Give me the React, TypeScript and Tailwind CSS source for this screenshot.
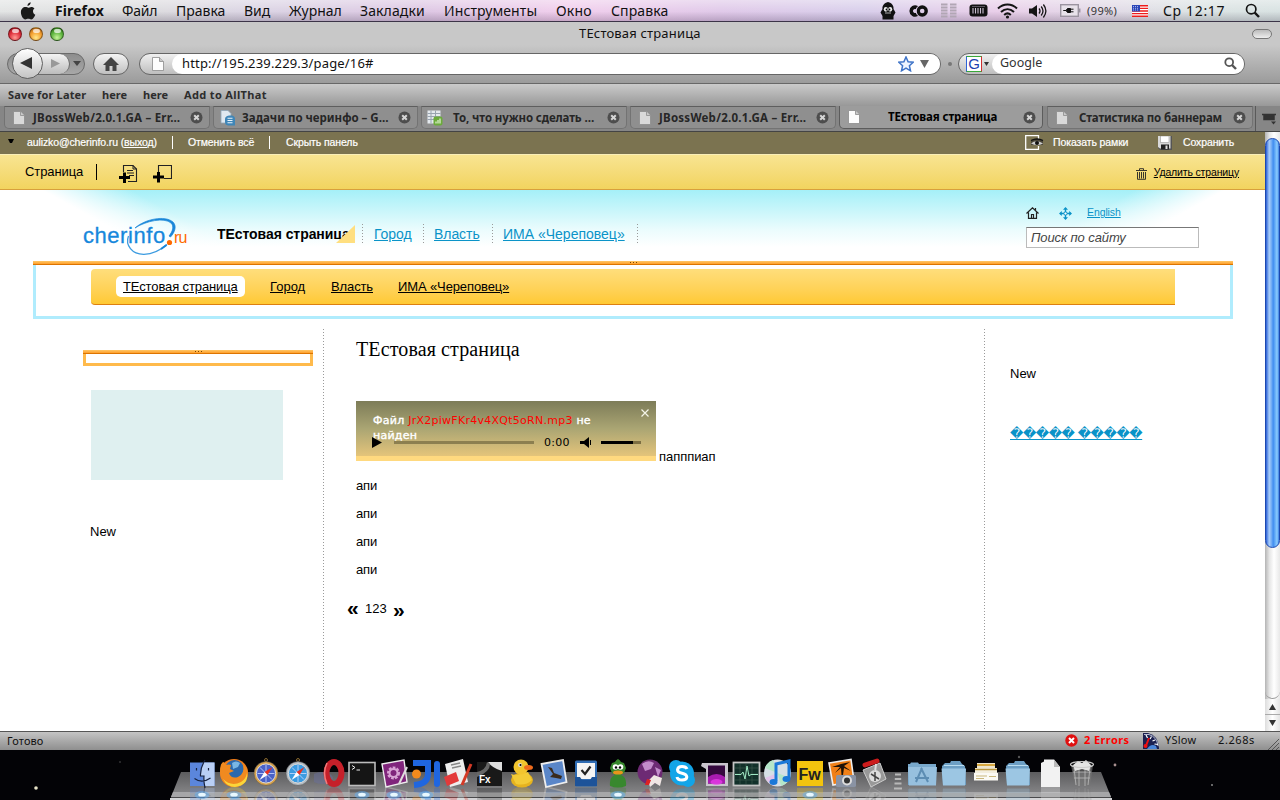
import React from "react";

const LUCIDA = "font-['Noto_Sans','Open_Sans',sans-serif]";
const ARIAL = "font-['Liberation_Sans',Arial,sans-serif]";

/* ---------- small glyphs ---------- */

function Page({ dim = false }: { dim?: boolean }) {
  return (
    <svg width="12" height="14" viewBox="0 0 12 14" className="shrink-0">
      <path d="M.5.5H7.5L11.500 4.500V13.500H.5Z" fill={dim ? "#d9d9d9" : "#fdfdfd"} stroke="#8b8b8b" strokeWidth=".8" />
      <path d="M7.500.5V4.500H11.500" fill="#c9c9c9" stroke="#8b8b8b" strokeWidth=".8" />
    </svg>
  );
}

function DocIcon() {
  return (
    <svg width="16" height="16" viewBox="0 0 16 16" className="shrink-0">
      <path d="M1 .5H8L11 3.500V13H1Z" fill="#dfe8f0" stroke="#8fa6b8" strokeWidth=".8" />
      <path d="M9 5.500H12Q15 6 15 9V15.500H8Q5 15 5 12V9Q5 6 9 5.500Z" fill="#3f86b8" />
      <path d="M7.500 8.200H12.500M7.500 10.500H12.500M7.500 12.800H12.500" stroke="#e8f3fb" strokeWidth="1.100" />
    </svg>
  );
}

function SheetIcon() {
  return (
    <svg width="16" height="16" viewBox="0 0 16 16" className="shrink-0">
      <rect x=".5" y=".5" width="13" height="13" fill="#e4e9ee" />
      <path d="M.5 3.500H13.500M.5 6.500H13.500M.5 9.500H13.500M4 .5V13.500M8.500 .5V13.500" stroke="#98a4b0" />
      <rect x="6.500" y="6.500" width="9" height="9" rx="2" fill="#6cab3c" />
      <path d="M9 13.500V11.500M11 13.500V10M13 13.500V8.500" stroke="#e6f6d8" strokeWidth="1.200" />
    </svg>
  );
}

function CloseDot() {
  return (
    <svg width="13" height="13" viewBox="0 0 13 13" className="shrink-0">
      <circle cx="6.500" cy="6.500" r="6" fill="#4d4d4d" />
      <path d="M4.200 4.200L8.800 8.800M8.800 4.200L4.200 8.800" stroke="#d4d4d4" strokeWidth="2" />
    </svg>
  );
}

/* ---------- system menu bar ---------- */

function MenuBar() {
  return (
    <header
      className={`relative flex h-[22px] shrink-0 items-center border-b border-[#3c3448] bg-[linear-gradient(to_bottom,rgba(255,255,255,.45),rgba(255,255,255,.12)_55%,rgba(60,50,70,.22)),linear-gradient(to_right,#dfe1e1_0,#d9d9da_130px,#d6cfe0_250px,#d9c0e0_420px,#efc8ea_570px,#dcc2e6_720px,#d3c8e8_860px,#e6c8e6_1000px,#dfd3e4_1090px,#d7e0e0_1200px,#d3dede)] text-[14px] leading-[22px] text-[#111] ${LUCIDA}`}
    >
      <div className="flex h-full w-[55px] shrink-0 items-center pl-5">
        <svg width="16" height="18" viewBox="0 0 16 18">
          <path d="M10.700.2c.2 1.700-1.500 3.700-3.200 3.700C7.200 2.200 8.900.4 10.700.2ZM13 9.200c0-1.700 1.300-2.600 1.500-2.700-1-1.500-2.500-1.600-3-1.600-1.300-.1-2.500.8-3.100.8-.7 0-1.700-.7-2.800-.7C3 5 .9 7 .9 10.200c0 3.300 2.300 7.300 4.400 7.300 1 0 1.700-.7 3-.7s1.800.7 3 .7c1.800 0 3.600-3.400 4-4.700C15.200 12.700 13 11.900 13 9.200Z" fill="#1a1a1a" />
        </svg>
      </div>
      <span className="w-[67px] shrink-0 font-bold tracking-[.1px]">Firefox</span>
      <span className="w-[54px] shrink-0 tracking-[-.2px]">Файл</span>
      <span className="w-[68px] shrink-0">Правка</span>
      <span className="w-[45px] shrink-0">Вид</span>
      <span className="w-[71px] shrink-0">Журнал</span>
      <span className="w-[84px] shrink-0 tracking-[.1px]">Закладки</span>
      <span className="w-[112px] shrink-0 tracking-[.1px]">Инструменты</span>
      <span className="w-[55px] shrink-0 tracking-[.2px]">Окно</span>
      <span className="w-[269px] shrink-0 tracking-[.1px]">Справка</span>

      <div className="w-[28px] shrink-0">
        <svg width="16" height="18" viewBox="0 0 16 18">
          <path d="M8 0C4 1 2 4 2.500 7L.5 10.500L2.500 14V17.500H13.500V14L15.500 10.500L13.500 7C14 4 12 1 8 0Z" fill="#111" />
          <ellipse cx="5.800" cy="7.300" rx="2" ry="2.400" fill="#eee" />
          <ellipse cx="10.200" cy="7.300" rx="2" ry="2.400" fill="#eee" />
          <circle cx="6.500" cy="7.500" r=".9" /><circle cx="9.500" cy="7.500" r=".9" />
          <path d="M5 11h6" stroke="#aaa" />
        </svg>
      </div>
      <div className="w-[33px] shrink-0">
        <svg width="20" height="12" viewBox="0 0 20 12">
          <path d="M9 2.600A3.900 3.900 0 1 0 9 9.400" fill="none" stroke="#111" strokeWidth="3.600" />
          <circle cx="14.200" cy="6" r="4" fill="none" stroke="#111" strokeWidth="3.400" />
          <path d="M8.900 2.500Q7.300 6 8.900 9.500" fill="none" stroke="#d9c8e2" strokeWidth="1" />
        </svg>
      </div>
      <div className="w-[28px] shrink-0">
        <svg width="16" height="15" viewBox="0 0 16 15">
          <path d="M0 1.500h6.500M9 1.500h6.500M0 4.500h6.500M9 4.500h6.500M0 7.500h6.500M9 7.500h6.500M0 10.500h6.500M9 10.500h6.500M0 13.500h6.500M9 13.500h6.500" stroke="#b1a6b4" strokeWidth="2" />
        </svg>
      </div>
      <div className="w-[28px] shrink-0">
        <svg width="19" height="13" viewBox="0 0 19 13">
          <rect x=".5" y=".5" width="18" height="12" rx="3" fill="#111" />
          <path d="M4 4v5.500M6.500 4v5.500M9 4v5.500M11.500 4v5.500M14 4v5.500" stroke="#cbbfd2" strokeWidth="1.100" />
          <path d="M3 2.500h13" stroke="#8a8090" strokeWidth=".6" />
        </svg>
      </div>
      <div className="w-[32px] shrink-0">
        <svg width="21" height="16" viewBox="0 0 21 16">
          <path d="M1 5.500C6.500.2 14.500.2 20 5.500M4 9c4-3.800 9-3.800 13 0M7.200 12c2-2 4.600-2 6.600 0" fill="none" stroke="#151515" strokeWidth="2" />
          <circle cx="10.500" cy="14" r="1.600" fill="#151515" />
        </svg>
      </div>
      <div className="w-[31px] shrink-0">
        <svg width="18" height="16" viewBox="0 0 18 16">
          <path d="M0 5.500h3L8 2v12L3 10.500H0Z" fill="#151515" />
          <path d="M10 5.500q2 2.500 0 5M12.200 3.500q3.600 4.500 0 9M14.400 1.500q5 6.500 0 13" fill="none" stroke="#151515" strokeWidth="1.300" />
        </svg>
      </div>
      <div className="w-[27px] shrink-0">
        <svg width="21" height="13" viewBox="0 0 21 13">
          <rect x=".7" y=".7" width="17.600" height="11.600" fill="#e8e2ea" stroke="#9b94a0" strokeWidth="1.400" />
          <path d="M19.700 4.500v4" stroke="#9b94a0" strokeWidth="1.500" />
          <path d="M3.500 6.500H6L7.500 4.500H10.500V8.500H7.500L6 6.500ZM11 5.200h2.500M11 7.800h2.500" fill="#111" stroke="#111" />
        </svg>
      </div>
      <span className="w-[45px] shrink-0 text-[11px] tracking-[.4px] text-[#333]">(99%)</span>
      <div className="w-[31px] shrink-0">
        <svg width="16" height="12" viewBox="0 0 16 12">
          <rect width="16" height="12" fill="#fff" />
          <path d="M0 .8h16M0 3.400h16M0 6h16M0 8.600h16M0 11.200h16" stroke="#ee1c1c" strokeWidth="1.400" />
          <rect width="8" height="6.500" fill="#2a46b8" />
          <path d="M1 1.500h6M1 3.300h6M1 5h6" stroke="#dfe5ff" strokeWidth=".7" strokeDasharray="1 1" />
        </svg>
      </div>
      <span className="w-[82px] shrink-0 tracking-[.65px] whitespace-nowrap">Ср 12:17</span>
      <svg width="16" height="16" viewBox="0 0 16 16" className="shrink-0">
        <circle cx="6.200" cy="6.200" r="4.700" fill="none" stroke="#151515" strokeWidth="1.700" />
        <path d="M9.700 9.700L14 14" stroke="#151515" strokeWidth="2.400" />
      </svg>
    </header>
  );
}

/* ---------- browser chrome ---------- */

const LIGHTS = [
  "bg-[radial-gradient(circle_at_50%_80%,#ff9c94,#e0303c_50%,#8c0c16)]",
  "bg-[radial-gradient(circle_at_50%_80%,#ffe88a,#f5a030_50%,#9c5510)]",
  "bg-[radial-gradient(circle_at_50%_80%,#c8f59a,#5fb540_50%,#23660f)]",
];

function TitleBar() {
  return (
    <div className={`flex h-[23px] shrink-0 items-center bg-[#c8c8c8] pl-2 ${LUCIDA}`}>
      <div className="flex w-[571px] shrink-0 items-center gap-[7px]">
        {LIGHTS.map((c) => (
          <span key={c} className={`h-[14px] w-[14px] rounded-full border border-black/40 ${c}`}>
            <span className="mx-auto mt-px block h-[4px] w-[7px] rounded-full bg-white/70" />
          </span>
        ))}
      </div>
      <span className="flex-1 text-[13px] leading-[20px] tracking-[.17px] -mt-[2px] text-[#111]">ТЕстовая страница</span>
      <span className="mr-2 h-[10px] w-[20px] rounded-full border border-[#777] bg-gradient-to-b from-[#bbb] to-[#eee]" />
    </div>
  );
}

function NavBar() {
  return (
    <div className={`flex h-[39px] shrink-0 items-center border-b border-[#686868] bg-gradient-to-b from-[#c8c8c8] to-[#9b9b9b] pl-[7px] pb-px text-[#111] ${LUCIDA}`}>
      <div className="flex h-[32px] w-[86px] shrink-0 items-center">
        <div className="relative flex h-[22px] w-[78px] items-center rounded-full border border-[#6b6b6b] bg-gradient-to-b from-[#8d8d8d] to-[#a8a8a8]">
          <span className="ml-[20px] flex h-[20px] w-[42px] items-center justify-end rounded-full border-r border-[#6b6b6b] bg-gradient-to-b from-[#f4f4f4] to-[#bcbcbc] pr-[9px]">
            <svg width="9" height="9" viewBox="0 0 9 9"><path d="M0 0L9 4.500L0 9Z" fill="#999" /></svg>
          </span>
          <svg width="8" height="5" viewBox="0 0 8 5" className="ml-[3px]"><path d="M0 0H8L4 5Z" fill="#444" /></svg>
          <span className="absolute -top-[6px] left-[4px] flex h-[31px] w-[31px] items-center justify-center rounded-full border border-[#606060] bg-gradient-to-b from-white to-[#c4c4c4]">
            <svg width="12" height="12" viewBox="0 0 12 12" className="mr-[3px]"><path d="M12 0V12L0 6Z" fill="#333" /></svg>
          </span>
        </div>
      </div>
      <div className="flex h-[22px] w-[36px] shrink-0 items-center justify-center rounded-full border border-[#666] bg-gradient-to-b from-[#f4f4f4] to-[#c0c0c0]">
        <svg width="16" height="14" viewBox="0 0 16 14"><path d="M8 0L16 8H13.500V14H9.500V9H6.500V14H2.500V8H0Z" fill="#444" /></svg>
      </div>
      <div className="ml-[10px] flex h-[22px] w-[802px] shrink-0 items-center rounded-full border border-[#666] bg-gradient-to-b from-[#f0f0f0] to-[#bebebe] pl-[12px]">
        <Page />
        <div className="ml-[8px] flex h-[20px] flex-1 items-center rounded-full bg-white pl-[10px]">
          <span className="-mt-px flex-1 text-[13px] leading-5 tracking-[.16px]">http://195.239.229.3/page/16#</span>
          <svg width="16" height="16" viewBox="0 0 16 16">
            <path d="M8 1L10.100 5.700L15.200 6.200L11.400 9.700L12.500 14.800L8 12.200L3.500 14.800L4.600 9.700L.8 6.200L5.900 5.700Z" fill="#eef5ff" stroke="#3f74c8" strokeWidth="1.500" />
          </svg>
          <svg width="9" height="8" viewBox="0 0 9 8" className="mr-[11px] ml-[6px]"><path d="M0 0H9L4.500 8Z" fill="#666" /></svg>
        </div>
      </div>
      <span className="mx-[7px] h-[4px] w-[4px] shrink-0 rounded-full bg-[#777]" />
      <div className="-ml-px flex h-[22px] w-[287px] shrink-0 items-center rounded-full border border-[#666] bg-gradient-to-b from-[#f0f0f0] to-[#bebebe] pl-[7px]">
        <span className="flex h-[16px] w-[16px] items-center justify-center border border-t-[#39a839] border-r-[#d03030] border-b-[#39a839] border-l-[#2f62d8] bg-white font-['Liberation_Sans',sans-serif] text-[15px] leading-none text-[#1c3fb0]">G</span>
        <svg width="5" height="4" viewBox="0 0 5 4" className="ml-[2px]"><path d="M0 0H5L2.500 4Z" fill="#333" /></svg>
        <div className="ml-[3px] flex h-[20px] flex-1 items-center rounded-full bg-white pr-[7px] pl-[8px]">
          <span className="-mt-px flex-1 text-[12.500px] leading-5 text-[#333]">Google</span>
          <svg width="13" height="13" viewBox="0 0 13 13">
            <circle cx="5.200" cy="5.200" r="3.900" fill="none" stroke="#555" strokeWidth="1.800" />
            <path d="M8 8L12 12" stroke="#555" strokeWidth="2.400" />
          </svg>
        </div>
      </div>
    </div>
  );
}

function Bookmarks() {
  return (
    <div className={`flex h-[22px] shrink-0 items-center bg-gradient-to-b from-[#cbcbcb] to-[#989898] pl-2 text-[11px] font-bold text-[#2d2d2d] ${LUCIDA}`}>
      <span className="w-[94px] shrink-0 tracking-[.15px]">Save for Later</span>
      <span className="w-[41px] shrink-0">here</span>
      <span className="w-[41px] shrink-0">here</span>
      <span className="tracking-[.35px]">Add to AllThat</span>
    </div>
  );
}

type TabInfo = { title: string; icon: React.ReactNode; box: string; text: string; active?: boolean };

const TABS: TabInfo[] = [
  { title: "JBossWeb/2.0.1.GA – Err…", icon: <Page dim />, box: "ml-[4px] w-[206px] pl-[8px]", text: "pl-[8px] tracking-[.24px]" },
  { title: "Задачи по черинфо – G…", icon: <DocIcon />, box: "ml-[3px] w-[205px] pl-[6px]", text: "pl-[6px]" },
  { title: "То, что нужно сделать …", icon: <SheetIcon />, box: "ml-[3px] w-[206px] pl-[5px]", text: "pl-[10px] tracking-[-.12px]" },
  { title: "JBossWeb/2.0.1.GA – Err…", icon: <Page dim />, box: "ml-[3px] w-[206px] pl-[8px]", text: "pl-[8px] tracking-[.24px]" },
  { title: "ТЕстовая страница", icon: <Page />, box: "ml-[3px] w-[204px] pl-[8px]", text: "pl-[28px] tracking-[-.12px]", active: true },
  { title: "Статистика по баннерам", icon: <Page dim />, box: "ml-[4px] w-[206px] pl-[8px]", text: "pl-[11px] tracking-[-.18px]" },
];

function TabStrip() {
  return (
    <div className={`flex h-[26px] shrink-0 items-start border-b border-[#444] bg-[#868686] text-[11.500px] font-bold ${LUCIDA}`}>
      {TABS.map((t, i) => (
        <div
          key={i}
          className={`flex h-[23px] shrink-0 items-center overflow-hidden rounded-b-[5px] border pr-[6px] whitespace-nowrap ${t.box} ${
            t.active ? "border-t-0 border-[#5c5c5c] bg-[#9c9c9c] text-black" : "border-[#737373] border-t-[#5e5e5e] bg-[#8f8f8f] text-[#262626]"
          }`}
        >
          {t.icon}
          <span className={`min-w-0 flex-1 overflow-hidden ${t.text}`}>{t.title}</span>
          <CloseDot />
        </div>
      ))}
      <div className="ml-[2px] flex h-[25px] flex-1 items-center justify-center border-l border-[#5a5a5a] pl-[2px]">
        <svg width="15" height="12" viewBox="0 0 15 12"><path d="M0 1.500H14M2 3H12V6.500H2Z" fill="#333" stroke="#333" strokeWidth="1.500" /><path d="M9 8.500H14L11.500 11.500Z" fill="#333" /></svg>
      </div>
    </div>
  );
}

/* ---------- page ---------- */

function AdminBar() {
  return (
    <div className={`flex h-[22px] shrink-0 items-center bg-[#7b7350] pb-px text-[10.500px] tracking-[-.11px] text-white ${ARIAL} [-webkit-text-stroke:.2px_white]`}>
      <svg width="6" height="5" viewBox="0 0 6 5" className="-mt-[2px] ml-[8px] shrink-0"><path d="M0 0H6L4 4H2Z" fill="#000" /></svg>
      <span className="ml-[13px] w-[145px] shrink-0 whitespace-nowrap">aulizko@cherinfo.ru (<u>выход</u>)</span>
      <span className="h-[13px] w-px shrink-0 bg-white" />
      <span className="ml-[15px] w-[81px] shrink-0 whitespace-nowrap">Отменить всё</span>
      <span className="h-[13px] w-px shrink-0 bg-white" />
      <span className="ml-[16px] w-[739px] shrink-0">Скрыть панель</span>
      <svg width="19" height="15" viewBox="0 0 19 15" className="shrink-0">
        <path d="M13.500 4V.7H.7V14.300H13.500V11" fill="none" stroke="#fff" strokeWidth="1.300" />
        <path d="M6 5Q12 2.500 18 5L18 10H6Z" fill="#4a4638" />
        <path d="M6 8.500Q11 4 18 8.500Q12 12 6 8.500" fill="#ccc" />
        <circle cx="12" cy="8" r="2" fill="#111" /><path d="M6 5.500Q12 2.500 18 5.500" fill="none" stroke="#111" strokeWidth="1.300" />
      </svg>
      <span className="ml-[9px] w-[105px] shrink-0">Показать рамки</span>
      <svg width="14" height="14" viewBox="0 0 14 14" className="shrink-0">
        <path d="M0 0H14V14H2L0 12Z" fill="#555" /><path d="M0 0H12.500V12.500H2L0 11Z" fill="#d8d8d8" />
        <rect x="2.500" y="0" width="8.500" height="6.500" fill="#fff" stroke="#999" strokeWidth=".6" />
        <rect x="3" y="8.500" width="8" height="5" fill="#222" /><rect x="7.500" y="9.500" width="2" height="3.500" fill="#ddd" />
      </svg>
      <span className="ml-[11px]">Сохранить</span>
    </div>
  );
}

function PageBar() {
  return (
    <div className={`flex h-[36px] shrink-0 items-center border-t border-b border-t-[#f9eeb8] border-b-[#d8a03c] bg-gradient-to-b from-[#f8e491] to-[#f2d45e] pl-[25px] text-black ${ARIAL}`}>
      <span className="w-[71px] shrink-0 text-[13px] tracking-[-.1px]">Страница</span>
      <span className="mr-[22px] h-[16px] w-px shrink-0 bg-black" />
      <svg width="19" height="19" viewBox="0 0 19 19" className="mt-[3px] mr-[15px] shrink-0">
        <path d="M4.500 8V1.500H14L17.500 5V17.500H9" fill="none" stroke="#222" strokeWidth="1.100" />
        <path d="M14 1.500V5H17.500M8 6.500H14M8 9H15M10 11.500H15" fill="none" stroke="#222" />
        <path d="M0 13.500H11M5.500 8.500V19" stroke="#000" strokeWidth="3" />
      </svg>
      <svg width="19" height="19" viewBox="0 0 19 19" className="mt-[3px] shrink-0">
        <path d="M5.500 8V1.500H18.500V14.500H11" fill="none" stroke="#222" strokeWidth="1.100" />
        <path d="M0 13H11M5.500 8V18.500" stroke="#000" strokeWidth="3" />
      </svg>
      <div className="mt-px mr-[26px] ml-auto flex items-center gap-[7px] text-[10.500px] tracking-[-.15px]">
        <svg width="11" height="12" viewBox="0 0 11 12" className="mt-[3px]">
          <path d="M0 2.500H11M3.500 2V.7H7.500V2M1.500 4V11.300H9.500V4M3.500 4V10.500M5.500 4V10.500M7.500 4V10.500" fill="none" stroke="#222" strokeWidth=".9" />
        </svg>
        <u>Удалить страницу</u>
      </div>
    </div>
  );
}

function HeaderGlow() {
  return (
    <svg width="1265" height="70" viewBox="0 0 1265 70" className="absolute top-0 left-0">
      <defs>
        <linearGradient id="sky" x1="0" y1="0" x2="0" y2="1">
          <stop offset="0" stopColor="#a5f0f8" /><stop offset=".3" stopColor="#c3f5fa" /><stop offset=".7" stopColor="#ebfcfd" /><stop offset="1" stopColor="#fff" />
        </linearGradient>
        <linearGradient id="fadeL" gradientUnits="userSpaceOnUse" x1="42" y1="0" x2="63" y2="-38">
          <stop offset="0" stopColor="#fff" /><stop offset="1" stopColor="#fff" stopOpacity="0" />
        </linearGradient>
        <linearGradient id="fadeR" gradientUnits="userSpaceOnUse" x1="1225" y1="0" x2="1204" y2="-38">
          <stop offset="0" stopColor="#fff" /><stop offset="1" stopColor="#fff" stopOpacity="0" />
        </linearGradient>
      </defs>
      <rect width="1265" height="57" fill="url(#sky)" />
      <rect width="632" height="70" fill="url(#fadeL)" />
      <rect x="632" width="633" height="70" fill="url(#fadeR)" />
    </svg>
  );
}

const DOT_V = "bg-[repeating-linear-gradient(to_bottom,#9a9a9a_0,#9a9a9a_1px,transparent_1px,transparent_3px)]";

function Logo() {
  return (
    <div className="relative h-[40px] w-[106px] shrink-0 font-['Liberation_Sans',sans-serif] leading-none">
      <span className="absolute top-[9px] left-0 text-[22px] tracking-[.55px] text-[#1788dc] [-webkit-text-stroke:.3px_#1788dc]">cherinfo</span>
      <span className="absolute top-[14px] left-[91px] text-[16px] tracking-[-.8px] text-[#ff6a00]">ru</span>
      <svg width="106" height="40" viewBox="0 0 106 40" className="absolute top-0 left-0">
        <path d="M52 12C62 3 82-1 90 6C94 10 92 16 87.500 21L86 20C90 15 91 10 88 7C81 1 63 5 52 12Z" fill="#1a86d8" stroke="#1a86d8" strokeWidth=".7" />
        <path d="M45.500 20C42 29 49 38.500 61 38.300C71 38 80 32 84 28.500" fill="none" stroke="#3b9be0" strokeWidth="1.300" />
        <path d="M78 33L83.500 29" stroke="#1a86d8" strokeWidth="2" />
        <circle cx="86.500" cy="26.500" r="2.600" fill="#ff6a00" />
      </svg>
    </div>
  );
}

function SiteHeader() {
  return (
    <div className={`relative h-[71px] shrink-0 ${ARIAL}`}>
      <HeaderGlow />
      <div className="relative flex h-full">
        <div className="flex w-[1026px] shrink-0 items-start pl-[83px] pt-[26px]">
          <Logo />
          <div className="mt-[8px] ml-[28px] flex items-center text-[14px] leading-[18px] tracking-[-.06px] text-[#0a93c8]">
            <div className="relative w-[138px] overflow-hidden font-bold whitespace-nowrap text-black">
              ТЕстовая страница
              <svg width="19" height="18" viewBox="0 0 19 18" className="absolute right-0 bottom-0"><path d="M19 0V18H0Z" fill="#ffdf80" /></svg>
            </div>
            <span className={`ml-[7px] h-[19px] w-px ${DOT_V}`} />
            <u className="w-[60px] pl-[11px]">Город</u>
            <span className={`h-[19px] w-px ${DOT_V}`} />
            <u className="w-[68px] pl-[10px]">Власть</u>
            <span className={`h-[19px] w-px ${DOT_V}`} />
            <u className="w-[144px] pl-[10px] tracking-normal whitespace-nowrap">ИМА «Череповец»</u>
            <span className={`h-[19px] w-px ${DOT_V}`} />
          </div>
        </div>
        <div className="flex flex-col pt-[15px]">
          <div className="flex h-[16px] items-center">
            <svg width="13" height="12" viewBox="0 0 13 12"><path d="M.5 6.500L6.500.8L12.500 6.500M2.500 5.500V11.400H10.500V5.500M5.500 11V7.500H7.500V11M9.500 3V1" fill="none" stroke="#222" strokeWidth="1.200" /></svg>
            <svg width="13" height="13" viewBox="0 0 13 13" className="ml-[20px]">
              <path d="M6.500 1V12M1 6.500H12" stroke="#0a93c8" strokeWidth="1.400" />
              <path d="M4 2.800L6.500 0L9 2.800ZM4 10.200L6.500 13L9 10.200ZM2.800 4L0 6.500L2.800 9ZM10.200 4L13 6.500L10.200 9Z" fill="#0a93c8" />
              <circle cx="6.500" cy="6.500" r="1.600" fill="#fff" stroke="#0a93c8" />
            </svg>
            <u className="ml-[15px] text-[10.500px] tracking-[-.1px] text-[#0a93c8]">English</u>
          </div>
          <div className="mt-[6px] flex h-[21px] w-[173px] items-center border border-[#bbb] border-t-[#777] bg-white pl-[4px] text-[13px] tracking-[-.1px] text-[#444] italic">Поиск по сайту</div>
        </div>
      </div>
    </div>
  );
}

function Grip() {
  return (
    <div className="flex h-[4px] shrink-0 justify-center gap-[2px] border-b border-[#dd7400] bg-gradient-to-b from-[#ffc766] to-[#ff9f26]">
      <i className="mt-px h-px w-px bg-[#774400]" />
      <i className="mt-px h-px w-px bg-[#774400]" />
      <i className="mt-px h-px w-px bg-[#774400]" />
    </div>
  );
}

function SubNav() {
  return (
    <div className={`ml-[33px] flex h-[58px] w-[1200px] shrink-0 flex-col ${ARIAL}`}>
      <Grip />
      <div className="flex-1 border-[3px] border-t-0 border-[#b0ecfd] pt-[4px] pl-[55px]">
        <nav className="flex h-[36px] w-[1084px] items-center rounded-l-[4px] border-b border-[#dd8010] bg-gradient-to-b from-[#ffde7b] to-[#ffc932] text-[13px] tracking-[-.12px] text-black">
          <u className="ml-[25px] flex h-[21px] w-[129px] shrink-0 items-center rounded-[5px] bg-white pl-[7px]">ТЕстовая страница</u>
          <u className="ml-[25px] w-[61px] shrink-0 tracking-normal">Город</u>
          <u className="w-[67px] shrink-0">Власть</u>
          <u>ИМА «Череповец»</u>
        </nav>
      </div>
    </div>
  );
}

function Player() {
  return (
    <div className="flex h-[60px] w-[300px] shrink-0 flex-col border-b-[5px] border-[#ffd97f] bg-gradient-to-b from-[#7d7c58] via-[#aaa573] to-[#e4c47a] font-['DejaVu_Sans',Verdana,sans-serif] text-[11px]">
      <div className="flex h-[34px] pt-[12px] pl-[17px]">
        <p className="w-[240px] leading-[15px] tracking-[.26px] text-white">
          <span className="[-webkit-text-stroke:.4px_white]">Файл</span> <span className="text-[#f00]">JrX2piwFKr4v4XQt5oRN.mp3</span> <span className="[-webkit-text-stroke:.4px_white]">не найден</span>
        </p>
        <svg width="8" height="8" viewBox="0 0 8 8" className="mt-[-4px] ml-[28px]"><path d="M.5.5L7.500 7.500M7.500.5L.5 7.500" stroke="#f4f4e8" strokeWidth="1.200" /></svg>
      </div>
      <div className="relative flex h-[15px] items-center pl-[16px] text-black">
        <svg width="11" height="11" viewBox="0 0 11 11"><path d="M0 0L10 5.500L0 11Z" /></svg>
        <span className="ml-[11px] h-[3px] w-[140px] bg-[#8c7f50]" />
        <span className="ml-[10px] w-[36px] tracking-[.25px]">0:00</span>
        <svg width="12" height="11" viewBox="0 0 12 11"><path d="M0 4H4L9 0V11L4 7H0ZM10 3H11V8H10Z" /></svg>
        <span className="ml-[9px] h-[3px] w-[32px] bg-black" />
        <span className="h-[3px] w-[8px] bg-[#7d6f42]" />
      </div>
    </div>
  );
}

function Columns() {
  return (
    <div className={`mt-[10px] flex min-h-0 flex-1 text-[13px] leading-[15px] text-black ${ARIAL}`}>
      <aside className="w-[323px] shrink-0 pt-[21px] pl-[83px]">
        <div className="flex h-[16px] w-[230px] flex-col">
          <Grip />
          <div className="flex-1 border-[3px] border-t-0 border-[#ffba4b]" />
        </div>
        <div className="mt-[24px] ml-[8px] h-[90px] w-[192px] bg-[#dff0f0]" />
        <p className="mt-[44px] ml-[7px]">New</p>
      </aside>
      <div className={`w-px shrink-0 ${DOT_V}`} />
      <main className="w-[660px] shrink-0 pl-[32px]">
        <h1 className="pt-[8px] font-['Liberation_Serif',serif] text-[20px] leading-[24px] tracking-[.12px]">ТЕстовая страница</h1>
        <div className="mt-[40px] flex items-end gap-[3px]">
          <Player />
          <span className="-mb-[3px] tracking-[-.05px]">папппиап</span>
        </div>
        <p className="mt-[17px] tracking-[-.15px]">апи</p>
        <p className="mt-[13px] tracking-[-.15px]">апи</p>
        <p className="mt-[13px] tracking-[-.15px]">апи</p>
        <p className="mt-[13px] tracking-[-.15px]">апи</p>
        <div className="mt-[23px] -ml-[9px] flex items-center">
          <b className="-mt-[3px] w-[18px] text-[21px] leading-[15px]">«</b>
          <span className="w-[28px]">123</span>
          <b className="mt-[2px] text-[21px] leading-[15px]">»</b>
        </div>
      </main>
      <div className={`w-px shrink-0 ${DOT_V}`} />
      <aside className="pt-[37px] pl-[25px]">
        <p>New</p>
        <p className="mt-[45px] font-['Liberation_Sans','DejaVu_Sans',sans-serif] tracking-[-.43px] whitespace-nowrap text-[#0a93c8] underline">����� �����</p>
      </aside>
    </div>
  );
}

function ScrollBar() {
  return (
    <div className="flex w-[15px] shrink-0 flex-col bg-[linear-gradient(to_right,#b4b4b4,#e6e6e6_30%,#fff_60%,#e8e8e8)]">
      <div className="h-[6px] shrink-0" />
      <div className="h-[410px] shrink-0 rounded-full border border-[#1c48b0] bg-[linear-gradient(to_right,#2a5fd6,#a8cdfa_25%,#6aa8f4_45%,#3f8cf0_55%,#8ccdff_85%,#3a7de0)]" />
      <div className="flex-1 rounded-b-full border-b border-[#999]" />
      <div className="flex h-[16px] shrink-0 items-center justify-center border-b border-[#aaa] bg-gradient-to-r from-[#ddd] via-white to-[#e4e4e4]">
        <svg width="7" height="6" viewBox="0 0 7 6"><path d="M3.500 0L7 6H0Z" fill="#333" /></svg>
      </div>
      <div className="flex h-[16px] shrink-0 items-center justify-center bg-gradient-to-r from-[#ddd] via-white to-[#e4e4e4]">
        <svg width="7" height="6" viewBox="0 0 7 6"><path d="M3.500 6L7 0H0Z" fill="#333" /></svg>
      </div>
    </div>
  );
}

function StatusBar() {
  return (
    <div className={`flex h-[19px] shrink-0 items-center border-t border-[#555] bg-gradient-to-b from-[#c4c4c4] to-[#8f8f8f] pl-[7px] text-[11px] text-[#111] ${LUCIDA}`}>
      <span className="w-[1058px] shrink-0 tracking-[.1px]">Готово</span>
      <svg width="13" height="13" viewBox="0 0 13 13" className="-mt-px shrink-0"><circle cx="6.500" cy="6.500" r="6.200" fill="#e01010" /><path d="M4 4L9 9M9 4L4 9" stroke="#fff" strokeWidth="2" /></svg>
      <span className="-mt-px ml-[6px] w-[59px] shrink-0 font-bold tracking-[.4px] whitespace-nowrap text-[#f00]">2 Errors</span>
      <svg width="16" height="16" viewBox="0 0 16 16" className="shrink-0">
        <path d="M0 0H5Q15 2 16 15V16H0Z" fill="#1b2050" /><path d="M4 16Q8 10 13 13L14 16Z" fill="#4a86d8" />
        <path d="M1 1.500H6Q14 4 15 13" fill="none" stroke="#dfe4f4" strokeWidth=".8" />
        <path d="M3 2L4.500 5M8.500 3.500L7 6M12 7L9.500 8M15 11.500L11.500 11" stroke="#fff" strokeWidth="1.200" />
        <path d="M2.500 14L6 5" stroke="#f01010" strokeWidth="2" /><circle cx="2.500" cy="13" r="2" fill="#f01010" />
      </svg>
      <span className="-mt-px ml-[6px] w-[53px] shrink-0 tracking-[.25px]">YSlow</span>
      <span className="-mt-px w-[50px] shrink-0 tracking-[.6px]">2.268s</span>
      <svg width="11" height="11" viewBox="0 0 11 11" className="mt-[6px] shrink-0"><path d="M0 11L11 0M4 11L11 4M8 11L11 8" stroke="#555" /></svg>
    </div>
  );
}

/* ---------- dock ---------- */

const compass = (ring: string, face: string) => (
  <>
    <circle cx="16" cy="10" r="1.500" fill="none" stroke="#8a6a30" />
    <circle cx="16" cy="23.500" r="12" fill={ring} stroke="#555" strokeWidth=".6" />
    <circle cx="16" cy="23.500" r="9.600" fill={face} stroke="#ddd" strokeWidth="1" />
    <path d="M16 15V32M7.500 23.500H24.500M10 17.500L22 29.500" stroke="#cfdcff" strokeWidth=".8" />
    <path d="M22.500 17L17.500 25L14.500 22Z" fill="#e83020" />
    <path d="M9.500 30L17.500 25L14.500 22Z" fill="#fff" />
  </>
);

const folder = (
  <>
    <path d="M4 16L7 13H12L13 11H22L24 14L27 16L28 35H5Z" fill="#6d9fc4" />
    <path d="M3.500 18.500H28L27 35.500H5Z" fill="#9cc6e3" />
    <path d="M6 15.500H26" stroke="#b9dcf0" />
  </>
);

type DockItem = { id: string; running?: boolean; art: React.ReactNode; label?: React.ReactNode };

const APPS: DockItem[] = [
  { id: "finder", running: true, art: (
    <>
      <rect x="4" y="12.500" width="24.500" height="23.500" fill="#5b86dc" />
      <path d="M17 12.500H28.500V36H18.500Q17.500 30 17.500 26H14.500Q14.800 18 17 12.500Z" fill="#b9cff5" />
      <path d="M19 10Q14 18 14.500 26H18Q17.500 31 19 38M8.500 28.500Q16 34 24.500 28M10.500 18V20.500M22.500 18V20.500" fill="none" stroke="#16213f" strokeWidth="1.200" />
    </>) },
  { id: "firefox", running: true, art: (
    <>
      <circle cx="16" cy="23" r="14" fill="#ef7d1a" />
      <circle cx="16.500" cy="19.500" r="9.500" fill="#2b69ae" />
      <path d="M14 13Q18 10 22 13L20 17L15 19Z" fill="#79b7e4" />
      <path d="M2 22Q2 12 6 12L8 15Q11 14 13 15L12 19L16 21L11 23Q13 29 20 27Q27 24 25 14Q30 18 30 24Q27 38 15 37Q3 35 2 22Z" fill="#f08a20" />
      <path d="M5 29Q13 37 23 32Q28 29 29 23Q31 35 17 37Q9 37 5 29Z" fill="#fbd53a" />
    </>) },
  { id: "safari-beta", art: compass("#d8a24a", "#4a62c8") },
  { id: "safari", art: compass("#b5bcc2", "#3b9be0") },
  { id: "opera", art: (
    <>
      <ellipse cx="8" cy="28" rx="11" ry="6" fill="#6a6f9c" opacity=".5" />
      <ellipse cx="20" cy="23" rx="7.500" ry="11" fill="none" stroke="#c6202a" strokeWidth="6" />
      <path d="M13 13Q8 23 13 34" fill="none" stroke="#f27c7c" strokeWidth="1.500" />
    </>) },
  { id: "terminal", running: true, art: (
    <>
      <rect x="3" y="12.500" width="26" height="23" fill="#151515" stroke="#bcbcbc" strokeWidth="1.600" />
      <path d="M6 15.500L9 17.500L6 19.500M10.500 20H14" fill="none" stroke="#eee" />
    </>) },
  { id: "textmate", running: true, art: (
    <>
      <path d="M4 14L26 10L29 32L8 37Z" fill="#80257c" stroke="#eee" strokeWidth="1.400" />
      <circle cx="15.500" cy="23" r="5" fill="none" stroke="#d7a3d4" strokeWidth="3" strokeDasharray="2.500 1.200" />
      <circle cx="15.500" cy="23" r="4" fill="none" stroke="#d7a3d4" strokeWidth="2" />
      <path d="M29 17L21 34" stroke="#ddd" strokeWidth="2" />
    </>) },
  { id: "idea", running: true, art: (
    <>
      <path d="M3 13H18V24Q18 34 4 35" fill="none" stroke="#1f66e0" strokeWidth="6" />
      <path d="M27 14V34" stroke="#1f66e0" strokeWidth="6" strokeLinecap="round" />
      <circle cx="6.500" cy="24" r="4.500" fill="#f58a1c" />
    </>) },
  { id: "cssedit", art: (
    <>
      <path d="M3 14L21 9L26 32L8 37Z" fill="#eee" />
      <path d="M2 27L14 22L17 31L5 36Z" fill="#e33a3a" />
      <path d="M29 14L20 35" stroke="#d43a26" strokeWidth="3" />
      <path d="M9 15L18 13M10 18L19 16" stroke="#888" strokeWidth="1.500" />
    </>) },
  { id: "effects", art: (
    <>
      <rect x="3" y="12" width="25" height="24" fill="#191919" />
      <path d="M14 12H28V21Q18 18 14 12Z" fill="#ddd" /><path d="M3 22Q12 20 13 12L16 14Q16 22 3 27Z" fill="#666" />
    </>), label: <text x="5" y="33" fontSize="10" fontWeight="700" fill="#fff" fontFamily="Liberation Sans">Fx</text> },
  { id: "duck", art: (
    <>
      <ellipse cx="16" cy="30" rx="11" ry="7.500" fill="#e6b31e" />
      <path d="M5 24Q10 26 14 24L22 22L26 30Q20 36 10 34Z" fill="#f3cb36" />
      <circle cx="15" cy="17" r="7.500" fill="#f2c52e" />
      <ellipse cx="22.500" cy="17.500" rx="4.500" ry="2.500" fill="#ee6a1c" /><circle cx="14" cy="15" r="2" fill="#ddd" /><circle cx="14.500" cy="15" r="1" />
    </>) },
  { id: "mail", art: (
    <>
      <path d="M3.500 14L25 10L28.500 32L8 37Z" fill="#5a86c8" stroke="#eee" strokeWidth="1.800" />
      <path d="M10 17L14 18L16 23L24 26L23 29L18 28L12 27L15 24Z" fill="#3a2a1c" />
    </>) },
  { id: "things", art: (
    <>
      <rect x="5" y="10.500" width="22" height="26" rx="1.500" fill="#2f6cb4" />
      <rect x="7" y="13" width="18" height="16" fill="#f4f4f4" />
      <path d="M5 27H10L12 30H20L22 27H27V36H5Z" fill="#1d5399" />
      <path d="M11.500 20L15 24L20.500 16.500" fill="none" stroke="#222" strokeWidth="2.200" />
    </>) },
  { id: "adium", running: true, art: (
    <>
      <path d="M16 9Q18 10 19 12L22 13L24 18L22 23L19 25Q25 27 24 36Q16 39 8 36Q7 27 13 25L10 23L8 18L10 13L13 12Q14 10 16 9Z" fill="#38882e" />
      <circle cx="13.500" cy="17" r="2.800" fill="#fff" /><circle cx="18.500" cy="17" r="2.800" fill="#fff" />
      <circle cx="14" cy="17.500" r="1.200" /><circle cx="18" cy="17.500" r="1.200" />
      <ellipse cx="16" cy="22.500" rx="5" ry="2" fill="#e8941c" />
    </>) },
  { id: "globe", art: (
    <>
      <circle cx="16" cy="22" r="12.500" fill="#6d2a74" />
      <path d="M8 14Q14 9 20 13L17 19L11 21ZM21 17L27 20L24 27Z" fill="#c38ccb" />
      <path d="M14 31L20 25L28 28L26 36L21 33L16 37Z" fill="#f0e6e4" /><path d="M13 29L17 30L15 35L11 35Z" fill="#d22" />
    </>) },
  { id: "skype", art: (
    <>
      <circle cx="10" cy="17" r="7" fill="#12a5e8" /><circle cx="22" cy="30" r="7" fill="#12a5e8" /><circle cx="16" cy="23.500" r="12" fill="#12a5e8" />
      <path d="M21 19Q20 16.500 16 16.500T11.500 19.700Q11.500 22.500 16 23.300T20.800 27Q20.500 30 16 30T11 27" fill="none" stroke="#fff" strokeWidth="3" />
    </>) },
  { id: "capture", art: (
    <>
      <path d="M4 13H30V36H8V19L3 16Z" fill="#c8c4cc" />
      <rect x="10" y="15.500" width="17" height="18" fill="#35083e" /><path d="M10 33.500V27Q18.500 21 27 27V33.500Z" fill="#a81cb0" /><ellipse cx="18.500" cy="32" rx="6" ry="3" fill="#f040f0" opacity=".7" />
    </>) },
  { id: "activity", art: (
    <>
      <rect x="3.500" y="12.500" width="26" height="23" fill="#12302a" stroke="#c4c4c4" strokeWidth="1.800" />
      <path d="M5 18H28M5 24H28M5 30H28M10 14V34M16 14V34M22 14V34" stroke="#3a564c" strokeWidth=".7" />
      <path d="M5 24.500H11L13 22L15 29L17 16L19 26L21 24.500H28" fill="none" stroke="#9fe8c4" />
    </>) },
  { id: "itunes", art: (
    <>
      <circle cx="15.500" cy="23" r="13.500" fill="#d6dfe6" /><path d="M15.500 23L3 18Q5 12 11 10ZM15.500 23L28 28Q25 34 19 36Z" fill="#b5e6c8" /><path d="M15.500 23L12 36Q6 33 3 28Z" fill="#e2c3ea" />
      <path d="M14 31V14L27 11V28" fill="none" stroke="#1b78d8" strokeWidth="3" />
      <ellipse cx="11.500" cy="32" rx="4" ry="3" fill="#1b78d8" /><ellipse cx="24.500" cy="29" rx="4" ry="3" fill="#1b78d8" />
    </>) },
  { id: "fireworks", running: true, art: <rect x="3" y="11" width="26" height="25" fill="#f2c40e" />,
    label: <text x="4.500" y="29.500" fontSize="16" fontWeight="700" fill="#222" fontFamily="Liberation Sans">Fw</text> },
  { id: "iphoto", art: (
    <>
      <path d="M3 13L25 9.500L28 31L7 35Z" fill="#f08018" stroke="#eee" strokeWidth="1.600" />
      <path d="M15 14L6 17L14 17L9 23L15 18L16 32L18 18L25 21L18 16L24 12Z" fill="#1c1208" />
      <rect x="10" y="25" width="20" height="12" rx="1.500" fill="#8a93a4" />
      <circle cx="21" cy="30.500" r="5" fill="#ddd" /><circle cx="21" cy="30.500" r="3" fill="#333" />
    </>) },
  { id: "pen", art: (
    <>
      <path d="M5 20L22 13L28 29L13 37Z" fill="#999" stroke="#ccc" strokeWidth="1" />
      <circle cx="17" cy="26" r="6" fill="#ddd" /><path d="M13 24L21 29M17 20V31" stroke="#444" strokeWidth="1.500" />
      <path d="M7 15L19 11" stroke="#cc1c1c" strokeWidth="5" strokeLinecap="round" /><path d="M18 14L17 22" stroke="#ddd" strokeWidth="2" />
    </>) },
];

const PLACES: DockItem[] = [
  { id: "applications", art: (
    <>
      <path d="M2 14H4L5 12.500H12L13 14H30V35H2Z" fill="#78a8cb" /><path d="M2 17H31L30 35.500H3Z" fill="#97c0de" />
      <path d="M16 18L10 32M15 18L22 32M9 28H23" stroke="#5d8db3" strokeWidth="2" fill="none" />
    </>) },
  { id: "documents", art: folder },
  { id: "stack", art: (
    <>
      <rect x="7" y="13" width="18" height="9" fill="#eee6cc" /><path d="M7 15H25" stroke="#d8a840" strokeWidth="2" />
      <rect x="5" y="18" width="22" height="8" fill="#f3eedd" /><path d="M5 19.500H27" stroke="#b9963c" strokeWidth="1.500" />
      <rect x="4" y="23" width="24" height="7.500" fill="#fbfaf4" /><path d="M6 26H17M6 28.500H14M19 26.500H26" stroke="#c9b77c" />
    </>) },
  { id: "downloads", art: folder },
  { id: "file", art: (
    <>
      <path d="M7 13L10 11.500V9.500H20L26 17V37H7Z" fill="#f2f2f2" /><path d="M20 9.500L26 17H20Z" fill="#bbb" />
    </>) },
  { id: "trash", art: (
    <>
      <path d="M5 15H27L24 36H9Z" fill="#777" opacity=".65" />
      <path d="M8 18L10 35M13 18V36M19 18V36M24 18L22 35M7 22H25M8 28H24" stroke="#bbb" strokeWidth=".8" />
      <path d="M7 15L12 11L16 13L20 10L25 15L23 21L16 19L9 21Z" fill="#e4e4e4" />
      <ellipse cx="16" cy="14.500" rx="11.500" ry="3" fill="none" stroke="#ccc" strokeWidth="1.200" />
    </>) },
];

function DockIcon({ item }: { item: DockItem }) {
  return (
    <svg width="32" height="50" viewBox="0 0 32 50" className="shrink-0">
      <g transform="translate(0 74) scale(1 -1)" opacity=".28">{item.art}</g>
      {item.art}
      {item.label}
      <path d="M0 43H32V47H0Z" fill="#a8a8a8" opacity=".55" />
      {item.running && (
        <>
          <ellipse cx="16" cy="45" rx="7.500" ry="4" fill="#5cb4ff" opacity=".45" />
          <ellipse cx="16" cy="44.700" rx="3.800" ry="1.900" fill="#e8f8ff" />
        </>
      )}
    </svg>
  );
}

function Dock() {
  return (
    <footer className="relative h-[50px] shrink-0 overflow-hidden bg-black">
      <svg width="1280" height="50" viewBox="0 0 1280 50" className="absolute top-0 left-0">
        <defs>
          <linearGradient id="shelf" x1="0" y1="0" x2="0" y2="1">
            <stop offset="0" stopColor="#5c5c5e" /><stop offset="1" stopColor="#8c8c8e" />
          </linearGradient>
        </defs>
        <rect width="1280" height="50" fill="#030306" />
        <circle cx="36" cy="38" r="1.800" fill="#e8e4c8" /><circle cx="1115" cy="15" r="1.400" fill="#a89090" />
        <circle cx="1019" cy="7" r="1.200" fill="#555" /><circle cx="1212" cy="35" r="1" fill="#888" /><circle cx="120" cy="12" r=".8" fill="#555" />
        <path d="M181 22H1101L1111 47H171Z" fill="url(#shelf)" />
        <path d="M173 42H1109L1111 47H171Z" fill="#a6a6a8" />
        <path d="M171 47H1111V48H171Z" fill="#4a4a4c" />
        <path d="M170 48H1112V50H170Z" fill="#d4d4d6" />
      </svg>
      <div className="relative flex pl-[186px]">
        {APPS.map((a) => <DockIcon key={a.id} item={a} />)}
        <svg width="16" height="50" viewBox="0 0 16 50" className="shrink-0">
          <path d="M5 24.500H11M4.800 29H11.200M4.500 33.500H11.500M4 38.500H12" stroke="#b8b8b8" strokeWidth="2" />
        </svg>
        {PLACES.map((a) => <DockIcon key={a.id} item={a} />)}
      </div>
    </footer>
  );
}

export default function App() {
  return (
    <div className="flex h-[800px] w-[1280px] flex-col overflow-hidden bg-white">
      <MenuBar />
      <TitleBar />
      <NavBar />
      <Bookmarks />
      <TabStrip />
      <div className="flex h-[599px] shrink-0">
        <div className="flex w-[1265px] shrink-0 flex-col bg-white">
          <AdminBar />
          <PageBar />
          <SiteHeader />
          <SubNav />
          <Columns />
        </div>
        <ScrollBar />
      </div>
      <StatusBar />
      <Dock />
    </div>
  );
}
